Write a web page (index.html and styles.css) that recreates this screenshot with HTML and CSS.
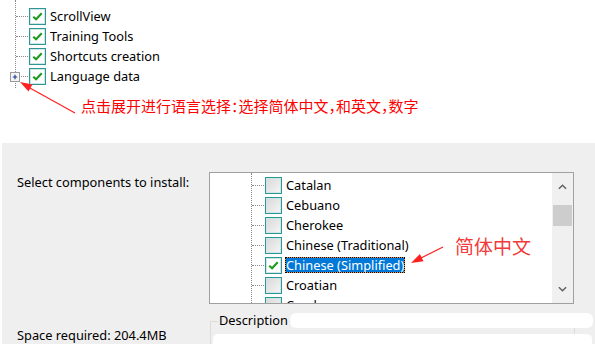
FILE: index.html
```html
<!DOCTYPE html>
<html>
<head>
<meta charset="utf-8">
<link rel="stylesheet" href="styles.css">
</head>
<body>
<div class="page">
  <section class="top">
    <div class="tree">
      <div class="row"><span class="conn"></span><span class="cb on"><svg viewBox="0 0 16 16"><path d="M3.5 8.2 L6.5 11 L12.5 4.5" /></svg></span><span class="lbl">ScrollView</span></div>
      <div class="row"><span class="conn"></span><span class="cb on"><svg viewBox="0 0 16 16"><path d="M3.5 8.2 L6.5 11 L12.5 4.5" /></svg></span><span class="lbl">Training Tools</span></div>
      <div class="row"><span class="conn"></span><span class="cb on"><svg viewBox="0 0 16 16"><path d="M3.5 8.2 L6.5 11 L12.5 4.5" /></svg></span><span class="lbl">Shortcuts creation</span></div>
      <div class="row"><span class="conn"><span class="plus"><svg viewBox="0 0 9 9"><path d="M2 4.5 H7 M4.5 2 V7" /></svg></span></span><span class="cb on"><svg viewBox="0 0 16 16"><path d="M3.5 8.2 L6.5 11 L12.5 4.5" /></svg></span><span class="lbl">Language data</span></div>
    </div>
    <p class="note">点击展开进行语言选择：选择简体中文，和英文，数字</p>
  </section>
  <section class="bottom">
    <div class="leftcol">
      <div class="label">Select components to install:</div>
      <div class="label space">Space required: 204.4MB</div>
    </div>
    <div class="rightcol">
      <div class="listbox">
        <div class="items">
          <div class="row"><span class="conn"></span><span class="cb"></span><span class="lbl">Catalan</span></div>
          <div class="row"><span class="conn"></span><span class="cb"></span><span class="lbl">Cebuano</span></div>
          <div class="row"><span class="conn"></span><span class="cb"></span><span class="lbl">Cherokee</span></div>
          <div class="row"><span class="conn"></span><span class="cb"></span><span class="lbl">Chinese (Traditional)</span></div>
          <div class="row"><span class="conn"></span><span class="cb on"><svg viewBox="0 0 16 16"><path d="M3.5 8.2 L6.5 11 L12.5 4.5" /></svg></span><span class="lbl sel">Chinese (Simplified)</span></div>
          <div class="row"><span class="conn"></span><span class="cb"></span><span class="lbl">Croatian</span></div>
          <div class="row"><span class="conn"></span><span class="cb"></span><span class="lbl">Czech</span></div>
        </div>
        <div class="scrollbar">
          <svg class="arr" viewBox="0 0 10 6"><path d="M1 5 L5 1 L9 5" /></svg>
          <div class="thumb"></div>
          <svg class="arr down" viewBox="0 0 10 6"><path d="M1 1 L5 5 L9 1" /></svg>
        </div>
      </div>
      <div class="group">
        <div class="legend-row"><span class="legend">Description</span><span class="blank"></span></div>
        <div class="desc"></div>
      </div>
    </div>
  </section>
  <div class="callout">简体中文</div>
  <svg class="arrows" viewBox="0 0 595 344">
    <line x1="75" y1="113" x2="29" y2="87.5" />
    <polygon points="20,82 32.4,84.4 28.5,91.4" />
    <line x1="443" y1="247" x2="421" y2="258" />
    <polygon points="411,263 423.5,261.2 419.9,254" />
  </svg>
</div>
</body>
</html>
```

FILE: styles.css
```css
* { box-sizing: border-box; }
html, body { margin: 0; padding: 0; }
body {
  width: 595px;
  height: 344px;
  overflow: hidden;
  background: #ffffff;
  font-family: "Noto Sans", "Open Sans", sans-serif;
  font-size: 12.8px;
  color: #000;
}
.page { position: relative; width: 595px; height: 344px; overflow: hidden; }

.top { height: 143px; background: #fff; }
.tree {
  margin-left: 15px;
  padding: 6px 0 2px 0;
  border-left: 1px dotted #8a8a8a;
  width: 200px;
}
.row {
  display: flex;
  align-items: center;
  height: 20px;
  position: relative;
}
.conn {
  width: 12px;
  border-top: 1px dotted #8a8a8a;
  margin-right: 1px;
  position: relative;
}
.plus {
  position: absolute;
  left: -6px;
  top: -5px;
  width: 10px;
  height: 10px;
  background: #f4f4f4;
  border: 1px solid #9a9a9a;
  display: flex;
}
.plus svg { width: 8px; height: 8px; }
.plus path { stroke: #1b3f8f; stroke-width: 1.3; fill: none; }
.cb {
  width: 17px;
  height: 17px;
  border: 1px solid #2f9696;
  box-shadow: inset 0 0 0 1px #cfe6e6;
  background: linear-gradient(135deg, #d8d8d8, #f6f6f6);
  display: flex;
  flex: none;
}
.cb.on { background: #ffffff; }
.cb svg { width: 15px; height: 15px; }
.cb path { stroke: #1c9a1c; stroke-width: 2.2; fill: none; }
.lbl { margin-left: 4px; white-space: nowrap; line-height: 16px; }

.note {
  margin: 9px 0 0 81px;
  font-family: "Noto Sans CJK SC", sans-serif;
  font-size: 15px;
  line-height: 18px;
  color: #ff0000;
  font-feature-settings: "halt";
}

.bottom {
  height: 201px;
  margin-left: 2px;
  background: #efefef;
  display: flex;
  padding: 29px 0 0 15px;
}
.leftcol { width: 192px; display: flex; flex-direction: column; }
.label { line-height: 20px; white-space: nowrap; }
.space { margin-top: 133px; }

.rightcol { width: 386px; }
.listbox {
  width: 365px;
  height: 132px;
  border: 1px solid #a0a0a0;
  background: #fff;
  display: flex;
  overflow: hidden;
}
.items {
  flex: 1;
  margin-left: 41px;
  padding-top: 2px;
  border-left: 1px dotted #8a8a8a;
}
.items .cb { width: 17px; height: 17px; }
.items .lbl { margin-left: 3px; padding: 0 1px; }
.lbl.sel {
  background: #0078d7;
  color: #fff;
  outline: 1px dotted #000;
  outline-offset: -1px;
  box-shadow: inset 0 0 0 1px #e09040;
}
.scrollbar {
  width: 21px;
  background: #f0f0f0;
  display: flex;
  flex-direction: column;
  align-items: center;
  padding-top: 11px;
}
.arr { width: 9px; height: 6px; }
.arr path { stroke: #606060; stroke-width: 1.6; fill: none; }
.thumb { width: 19px; height: 21px; background: #cdcdcd; margin-top: 15px; margin-left: -1px; }
.arr.down { margin-top: 60px; }

.group {
  margin-top: 9px;
  margin-left: 1px;
  position: relative;
  width: 383px;
}
.legend-row { display: flex; align-items: center; height: 14px; position: relative; }
.legend-row::before {
  content: "";
  position: absolute;
  left: 0; right: 20px; top: 8px;
  border-top: 1px solid #dcdcdc;
}
.group::after {
  content: "";
  position: absolute;
  left: 0; top: 8px; width: 363px; height: 40px;
  border-left: 1px solid #dcdcdc;
  border-right: 1px solid #dcdcdc;
}
.legend {
  position: relative;
  z-index: 1;
  background: #efefef;
  margin-left: 8px;
  padding: 0 1px;
  line-height: 14px;
}
.blank {
  position: relative;
  z-index: 1;
  width: 304px;
  height: 15px;
  margin-left: 1px;
  background: #fff;
  border-radius: 6px;
}
.desc {
  position: relative;
  z-index: 1;
  margin: 7px 0 0 3px;
  width: 379px;
  height: 20px;
  background: #fff;
  border-radius: 5px 5px 0 0;
}

.callout {
  position: absolute;
  left: 455px;
  top: 234px;
  font-family: "Noto Sans CJK SC", sans-serif;
  font-size: 19px;
  line-height: 24px;
  color: #f23a3a;
}
.arrows {
  position: absolute;
  left: 0; top: 0;
  width: 595px; height: 344px;
  pointer-events: none;
}
.arrows line { stroke: #ff2020; stroke-width: 1.2; }
.arrows polygon { fill: #ff2020; }
```
